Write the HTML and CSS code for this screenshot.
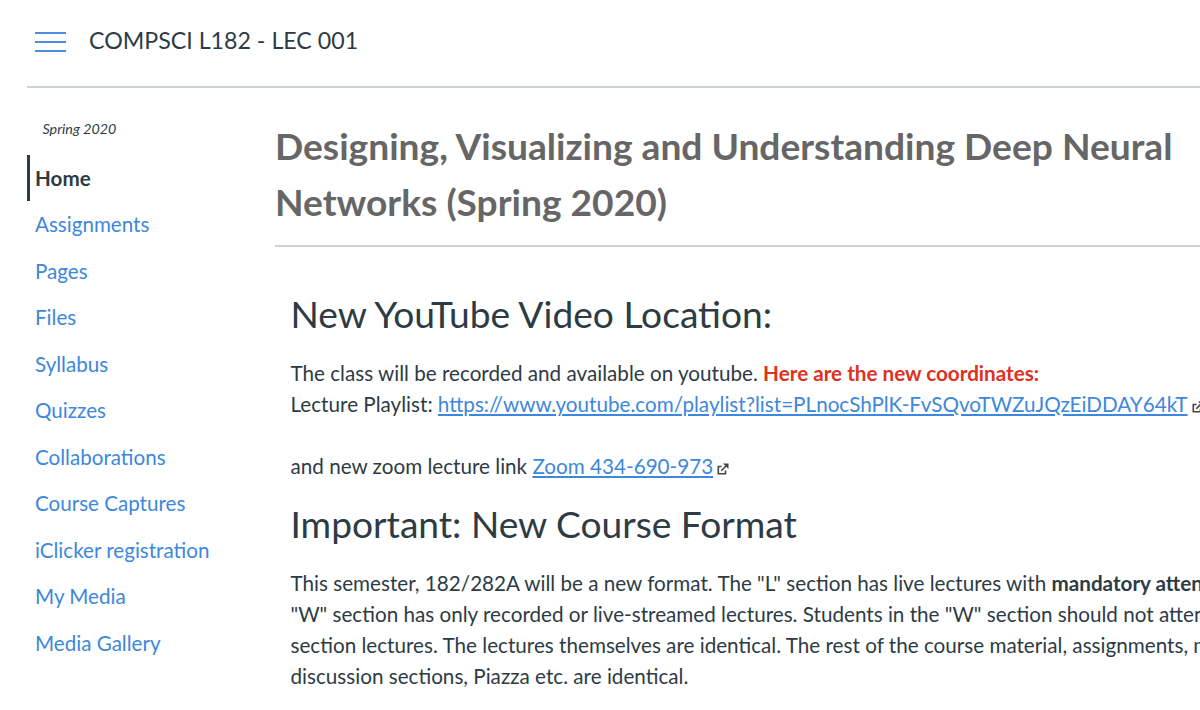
FILE: index.html
```html
<!DOCTYPE html>
<html lang="en">
<head>
    <meta charset="UTF-8">
    <title>COMPSCI L182 - LEC 001</title>
    <link rel="stylesheet" href="styles.css">
</head>
<body>
    <header class="top-bar">
        <button class="menu-toggle" aria-label="Menu">
            <span></span>
            <span></span>
            <span></span>
        </button>
        <span class="course-name">COMPSCI L182 - LEC 001</span>
    </header>

    <div class="layout">
        <nav class="sidebar">
            <div class="term">Spring 2020</div>
            <ul>
                <li><a class="active" href="#">Home</a></li>
                <li><a href="#">Assignments</a></li>
                <li><a href="#">Pages</a></li>
                <li><a href="#">Files</a></li>
                <li><a href="#">Syllabus</a></li>
                <li><a href="#">Quizzes</a></li>
                <li><a href="#">Collaborations</a></li>
                <li><a href="#">Course Captures</a></li>
                <li><a href="#">iClicker registration</a></li>
                <li><a href="#">My Media</a></li>
                <li><a href="#">Media Gallery</a></li>
            </ul>
        </nav>

        <main class="content">
            <h1>Designing, Visualizing and Understanding Deep Neural<br>Networks (Spring 2020)</h1>
            <div class="page-body">
                <h2>New YouTube Video Location:</h2>
                <p>The class will be recorded and available on youtube. <strong class="alert">Here are the new coordinates:</strong><br>
                Lecture Playlist: <a href="#">https://www.youtube.com/playlist?list=PLnocShPlK-FvSQvoTWZuJQzEiDDAY64kT</a><svg class="external" viewBox="0 0 12 12"><path d="M4.5 3.5H1.3v7.2h7.2V7.5M4.3 7.7L9.5 2.5"/><path class="tip" d="M6 .5h5.5v5.5z"/></svg><br>
                <br>
                and new zoom lecture link <a href="#">Zoom 434-690-973</a><svg class="external" viewBox="0 0 12 12"><path d="M4.5 3.5H1.3v7.2h7.2V7.5M4.3 7.7L9.5 2.5"/><path class="tip" d="M6 .5h5.5v5.5z"/></svg></p>
                <h2 class="second">Important: New Course Format</h2>
                <p>This semester, 182/282A will be a new format. The "L" section has live lectures with <strong>mandatory atten</strong><br>
                "W" section has only recorded or live-streamed lectures. Students in the "W" section should not atten<br>
                section lectures. The lectures themselves are identical. The rest of the course material, assignments, m<br>
                discussion sections, Piazza etc. are identical.</p>
            </div>
        </main>
    </div>
</body>
</html>
```
FILE: styles.css
```css
* {
    box-sizing: border-box;
}
body {
    margin: 0;
    height: 710px;
    overflow: hidden;
    background-color: #fff;
    color: #2d3b45;
    font-family: Lato, sans-serif;
    font-size: 20.66px;
    line-height: 31px;
}
a {
    color: #3d87dc;
}
.top-bar {
    display: flex;
    align-items: center;
    height: 88px;
    margin-left: 27px;
    padding: 0 0 5px 8px;
    border-bottom: 2px solid #cdd2d4;
}
.menu-toggle {
    display: flex;
    flex-direction: column;
    justify-content: space-between;
    width: 31px;
    height: 20px;
    margin-top: 3px;
    padding: 0;
    border: 0;
    background: none;
}
.menu-toggle span {
    height: 2px;
    background-color: #4a8fdf;
}
.course-name {
    margin-left: 23px;
    font-size: 23.2px;
}
.layout {
    display: flex;
}
.sidebar {
    flex: 0 0 275px;
    padding: 25px 0 0 27px;
}
.term {
    height: 41.6px;
    padding-left: 15.5px;
    font-size: 14.3px;
    font-style: italic;
}
.sidebar ul {
    margin: 0;
    padding: 0;
    list-style: none;
}
.sidebar a {
    display: block;
    height: 46.5px;
    padding-left: 8px;
    font-size: 20.6px;
    line-height: 46.5px;
    text-decoration: none;
}
.sidebar .active {
    padding-left: 5px;
    border-left: 3px solid #2d3b45;
    color: #2d3b45;
    font-weight: bold;
}
.content {
    flex: 0 0 925px;
    white-space: nowrap;
}
h1 {
    margin: 0;
    padding: 30px 0 15px;
    border-bottom: 2px solid #cdd2d4;
    color: #666;
    font-size: 37.15px;
    line-height: 56px;
}
.page-body {
    padding: 39px 0 0 15.5px;
}
h2 {
    margin: 0;
    font-size: 37.15px;
    font-weight: normal;
    line-height: 56px;
}
p {
    margin: 16px 0 0;
}
.second {
    margin-top: 14px;
}
.alert {
    color: #e0301e;
}
.external {
    width: 12px;
    height: 12px;
    margin-left: 4px;
    vertical-align: -1px;
    fill: none;
    stroke: #444;
    stroke-width: 1.6;
}
.external .tip {
    fill: #444;
    stroke: none;
}
```
